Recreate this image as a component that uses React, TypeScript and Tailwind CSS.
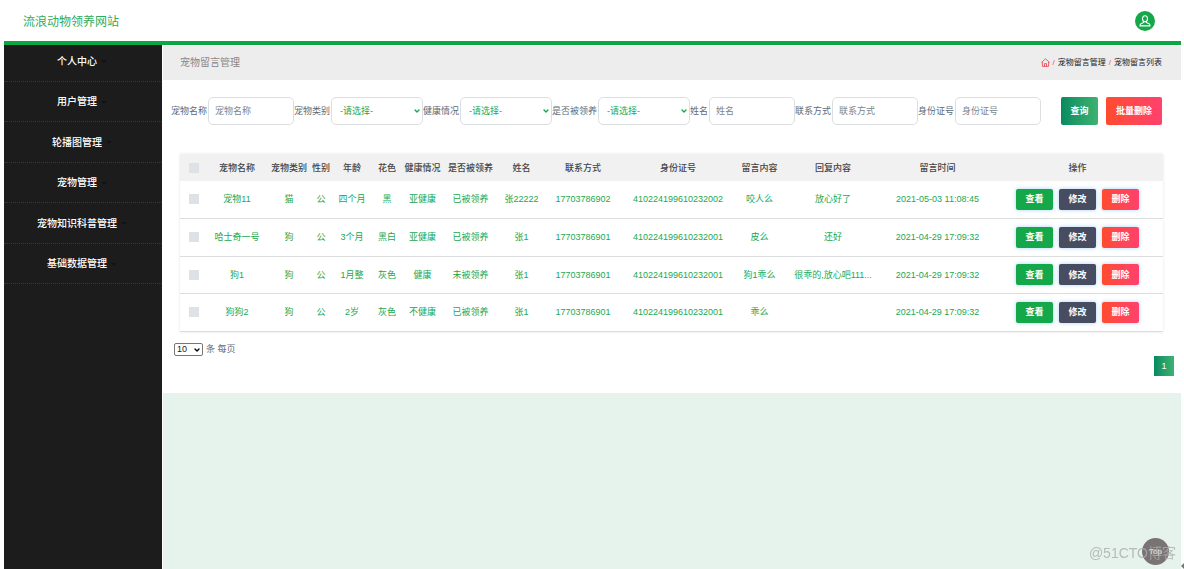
import { ChevronDown } from 'lucide-react';

const MENU = ['个人中心', '用户管理', '轮播图管理', '宠物管理', '宠物知识科普管理', '基础数据管理'];

const FILTERS = [
  { id: 'petName', label: '宠物名称', type: 'text', width: 'w-[86px]' },
  { id: 'petType', label: '宠物类别', type: 'select', width: 'w-[92px]' },
  { id: 'health', label: '健康情况', type: 'select', width: 'w-[92px]' },
  { id: 'adopted', label: '是否被领养', type: 'select', width: 'w-[92px]' },
  { id: 'userName', label: '姓名', type: 'text', width: 'w-[86px]' },
  { id: 'phone', label: '联系方式', type: 'text', width: 'w-[86px]' },
  { id: 'idNumber', label: '身份证号', type: 'text', width: 'w-[86px]' },
];

const COLUMNS = [
  { title: '宠物名称', width: 'w-[60px]' },
  { title: '宠物类别', width: 'w-[44px]' },
  { title: '性别', width: 'w-[20px]' },
  { title: '年龄', width: 'w-[42px]' },
  { title: '花色', width: 'w-[28px]' },
  { title: '健康情况', width: 'w-[43px]' },
  { title: '是否被领养', width: 'w-[53px]' },
  { title: '姓名', width: 'w-[49px]' },
  { title: '联系方式', width: 'w-[74px]' },
  { title: '身份证号', width: 'w-[116px]' },
  { title: '留言内容', width: 'w-[47px]' },
  { title: '回复内容', width: 'w-[100px]' },
  { title: '留言时间', width: 'w-[109px]' },
  { title: '操作', width: 'w-[171px]' },
];

const ROWS = [
  ['宠物11', '猫', '公', '四个月', '黑', '亚健康', '已被领养', '张22222', '17703786902', '410224199610232002', '咬人么', '放心好了', '2021-05-03 11:08:45'],
  ['哈士奇一号', '狗', '公', '3个月', '黑白', '亚健康', '已被领养', '张1', '17703786901', '410224199610232001', '皮么', '还好', '2021-04-29 17:09:32'],
  ['狗1', '狗', '公', '1月整', '灰色', '健康', '未被领养', '张1', '17703786901', '410224199610232001', '狗1乖么', '很乖的,放心吧111...', '2021-04-29 17:09:32'],
  ['狗狗2', '狗', '公', '2岁', '灰色', '不健康', '已被领养', '张1', '17703786901', '410224199610232001', '乖么', '', '2021-04-29 17:09:32'],
];

const ROW_BUTTON = 'h-[21px] w-[37px] rounded-[2px] font-bold text-white shadow-[0_0_4px_#a9d2f3]';

function Checkbox({ label }: { label: string }) {
  return (
    <input
      type="checkbox"
      aria-label={label}
      className="block w-[10px] h-[10px] mx-auto appearance-none bg-[#dee2e6] checked:bg-[#14a84b]"
    />
  );
}

function Header() {
  return (
    <header className="relative z-10 flex h-[45px] items-center justify-between border-b-4 border-[#0ca741] bg-white pl-[19px] pr-[26px]">
      <h1 className="pt-[2px] text-[12px] text-[#2fab5b]">流浪动物领养网站</h1>
      <button type="button" aria-label="个人中心" className="flex h-5 w-5 items-center justify-center rounded-full bg-[#14a84b]">
        <svg className="h-3 w-3" viewBox="0 0 12 12" fill="none" stroke="#fff" strokeWidth="1.1">
          <ellipse cx="6" cy="3.7" rx="2.5" ry="3" />
          <path d="M4.700 6.300v1.200L1.900 8.700c-.6.300-.9.900-.9 2.200h10c0-1.300-.3-1.900-.9-2.200L7.300 7.500V6.300" />
        </svg>
      </button>
    </header>
  );
}

function Sidebar() {
  return (
    <nav className="-mt-1 w-[158px] shrink-0 bg-[#1c1c1c]">
      <ul className="grid h-[243px] grid-rows-6">
        {MENU.map((item) => (
          <li key={item} className="border-b border-dotted border-[#303a48]">
            <a href="#" className="flex h-full items-center justify-center gap-1 pt-[2px] text-[10px] font-medium text-white">
              {item}
              <span className="mr-[2px] border-x-[3px] border-t-[3px] border-x-transparent border-t-[#121212]" />
            </a>
          </li>
        ))}
      </ul>
    </nav>
  );
}

function Breadcrumb() {
  return (
    <div className="mt-px flex h-[34px] items-center justify-between bg-[#ededed] pl-[17px] pr-[19px]">
      <h2 className="text-[10px] text-[#8b8585]">宠物留言管理</h2>
      <div className="flex items-center gap-[3px] text-[8px] text-[#222]">
        <a href="#" aria-label="首页" className="pb-[2px]">
          <svg className="h-[9px] w-[9px]" viewBox="0 0 9 9" fill="none" stroke="#e8505b" strokeWidth="0.9">
            <path d="M.5 4.500 4.500.8l4 3.700M1.400 3.800v4.600h6.200V3.800M3.500 8.400V5.600h2v2.800" />
          </svg>
        </a>
        <span className="text-[#e8505b]">/</span>
        <a href="#">宠物留言管理</a>
        <span className="text-[#e8505b]">/</span>
        <span>宠物留言列表</span>
      </div>
    </div>
  );
}

function Filters() {
  return (
    <form className="flex items-center justify-between pl-2 pr-[19px] pt-[17px]">
      <div className="flex">
        {FILTERS.map((filter) => (
          <div key={filter.id} className="flex items-center gap-px">
            <label htmlFor={filter.id} className="whitespace-nowrap text-[#5d6b78]">
              {filter.label}
            </label>
            {filter.type === 'text' ? (
              <input
                id={filter.id}
                type="text"
                placeholder={filter.label}
                className={`h-[28px] rounded-[5px] border border-[#dcdfe2] bg-white px-[6px] placeholder:text-[#7b858e] ${filter.width}`}
              />
            ) : (
              <div className={`relative ${filter.width}`}>
                <select
                  id={filter.id}
                  className="block h-[28px] w-full appearance-none rounded-[5px] border border-[#dcdfe2] bg-white pl-2 text-[#21a851]"
                >
                  <option>-请选择-</option>
                </select>
                <ChevronDown className="pointer-events-none absolute right-[2px] top-[10px] h-2 w-2 text-[#14a84b]" strokeWidth={4} />
              </div>
            )}
          </div>
        ))}
      </div>
      <div className="flex gap-2">
        <button type="button" className="h-[28px] w-[37px] rounded-[2px] bg-linear-to-r from-[#048a60] to-[#3cb371] font-bold text-white">
          查询
        </button>
        <button type="button" className="h-[28px] w-[56px] rounded-[2px] bg-linear-to-r from-[#ff4b2b] to-[#ff416c] font-bold text-white">
          批量删除
        </button>
      </div>
    </form>
  );
}

function MessageTable() {
  return (
    <div className="mt-[29px] pl-[17px] pr-[18px]">
      <table className="w-full table-fixed whitespace-nowrap text-center shadow-[0_0_3px_#e4e4e4]">
        <thead>
          <tr className="h-[27px] bg-[#f1f1f1] text-[#444]">
            <th className="w-[27px]">
              <Checkbox label="全选" />
            </th>
            {COLUMNS.map((column) => (
              <th key={column.title} className={`font-medium ${column.width}`}>
                {column.title}
              </th>
            ))}
          </tr>
        </thead>
        <tbody>
          {ROWS.map((row) => (
            <tr key={row[0]} className="h-[37px] border-b border-[#dcdddf] text-[#21a851] even:h-[38px]">
              <td>
                <Checkbox label={row[0]} />
              </td>
              {row.map((cell, i) => (
                <td key={i}>{cell}</td>
              ))}
              <td>
                <div className="flex justify-center gap-[6px]">
                  <button type="button" className={`${ROW_BUTTON} bg-[#14a84b]`}>查看</button>
                  <button type="button" className={`${ROW_BUTTON} bg-[#474c60]`}>修改</button>
                  <button type="button" className={`${ROW_BUTTON} bg-linear-to-r from-[#ff4b2b] to-[#ff416c]`}>删除</button>
                </div>
              </td>
            </tr>
          ))}
        </tbody>
      </table>
    </div>
  );
}

function Pager() {
  return (
    <div className="pb-[17px] pl-[11px] pr-[7px] pt-[11px]">
      <div className="flex items-center gap-[3px] text-[#5d6b78]">
        <div className="relative w-[29px]">
          <select id="pageSize" className="block h-[13px] w-full appearance-none rounded-[2px] border border-[#767676] bg-white pl-[2px] leading-none text-[#222]">
            <option>10</option>
          </select>
          <ChevronDown className="pointer-events-none absolute right-[2px] top-[3px] h-2 w-2 text-black" strokeWidth={4} />
        </div>
        <label htmlFor="pageSize">条 每页</label>
      </div>
      <div className="flex justify-end">
        <button type="button" className="h-5 w-5 bg-linear-to-r from-[#048a60] to-[#3cb371] font-medium text-white">
          1
        </button>
      </div>
    </div>
  );
}

export default function App() {
  return (
    <div className="flex min-h-screen flex-col bg-white pl-1 pr-[3px] font-['Liberation_Sans','Noto_Sans_CJK_SC',sans-serif] text-[9px] leading-3">
      <Header />
      <div className="flex flex-1">
        <Sidebar />
        <main className="ml-px min-w-0 flex-1 bg-[#e6f3ec]">
          <div className="flow-root bg-white">
            <Breadcrumb />
            <Filters />
            <MessageTable />
            <Pager />
          </div>
        </main>
      </div>

      {/* back to top */}
      <a href="#" className="fixed bottom-1 right-[15px] flex h-[27px] w-[27px] items-center justify-center rounded-full bg-[#7a7376] text-[8px] text-white">
        Top
      </a>
      <span className="pointer-events-none fixed bottom-2 right-2 text-[14px] leading-4 text-[#a9adab]/80">@51CTO博客</span>
      <span className="fixed bottom-0 right-0 border-y-[3px] border-r-[3px] border-y-transparent border-r-[#777]" />
    </div>
  );
}
